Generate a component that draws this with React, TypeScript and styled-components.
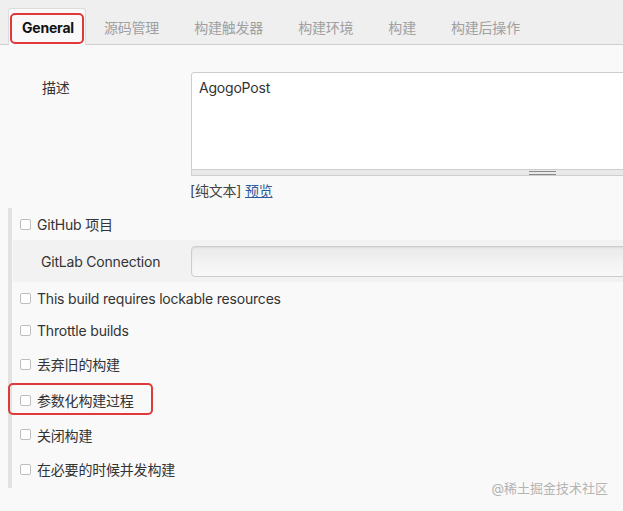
import React from "react";
import styled, { createGlobalStyle } from "styled-components";

const GlobalStyle = createGlobalStyle`
  html, body {
    margin: 0;
    padding: 0;
    background: #f9f9f9;
    overflow: hidden;
  }
  body {
    font-family: Inter, "Noto Sans CJK SC", sans-serif;
    letter-spacing: -0.2px;
    color: #333;
    font-size: 14px;
  }
`;

const Page = styled.div`
  position: relative;
  width: 623px;
  height: 511px;
  overflow: hidden;
  background: #f9f9f9;
`;

const TabBar = styled.div`
  display: flex;
  align-items: flex-end;
  height: 44px;
  padding-left: 8px;
  background: #efefef;
  border-bottom: 1px solid #cfcfcf;
`;

const Tab = styled.div<{ $active?: boolean }>`
  position: relative;
  display: flex;
  align-items: center;
  box-sizing: border-box;
  height: ${(p) => (p.$active ? "37px" : "36px")};
  padding: ${(p) => (p.$active ? "0 11px 0 13px" : "0 16px 0 17px")};
  margin-bottom: ${(p) => (p.$active ? "-1px" : "0")};
  font-size: 14px;
  font-weight: ${(p) => (p.$active ? 700 : 400)};
  color: ${(p) => (p.$active ? "#111" : "#a0a0a0")};
  background: ${(p) => (p.$active ? "#f9f9f9" : "transparent")};
  border: ${(p) => (p.$active ? "1px solid #dcdcdc" : "1px solid transparent")};
  border-bottom: none;
  border-radius: 3px 3px 0 0;

  ${(p) =>
    p.$active &&
    `
    &::after {
      content: "";
      position: absolute;
      top: 4px;
      left: 1px;
      right: 1px;
      bottom: 1px;
      border: 2px solid #e0393a;
      border-radius: 5px;
    }
  `}
`;

const Content = styled.div`
  padding-top: 27px;
`;

const FieldRow = styled.div`
  display: grid;
  grid-template-columns: 191px 1fr;
`;

const FieldLabel = styled.div`
  padding: 5px 0 0 42px;
  font-size: 14px;
  color: #333;
`;

const EditorWrap = styled.div`
  margin-right: -30px;
`;

const TextArea = styled.div`
  height: 98px;
  padding: 6px 7px;
  box-sizing: border-box;
  background: #fff;
  border: 1px solid #cdcdcd;
  border-radius: 3px 3px 0 0;
  font-size: 14px;
  color: #333;
`;

const Grip = styled.div`
  display: flex;
  height: 5px;
  padding-left: 337px;
  background: #e9e9e9;
  border: 1px solid #cfcfcf;
  border-top: none;

  &::before {
    content: "";
    width: 27px;
    height: 2px;
    margin-top: 1px;
    border-top: 1px solid #8a8a8a;
    border-bottom: 1px solid #8a8a8a;
  }
`;

const Hint = styled.div`
  padding-top: 4px;
  margin-left: -1px;
  font-size: 14px;
  color: #444;
`;

const PreviewLink = styled.a`
  color: #2c5a9c;
  text-decoration: underline;
`;

const Section = styled.div`
  margin: 8px 0 0 8px;
  border-left: 4px solid #e2e2e2;
  padding-bottom: 1px;
`;

const OptionRow = styled.label<{ $h: number; $marked?: boolean }>`
  position: relative;
  display: flex;
  align-items: center;
  gap: 6px;
  height: ${(p) => p.$h}px;
  padding-left: 8px;
  font-size: 14px;
  color: #333;

  ${(p) =>
    p.$marked &&
    `
    &::after {
      content: "";
      position: absolute;
      top: 1px;
      left: -4px;
      width: 145px;
      bottom: 3px;
      box-sizing: border-box;
      border: 2px solid #e0393a;
      border-radius: 5px;
    }
  `}
`;

const Box = styled.span`
  width: 11px;
  height: 11px;
  box-sizing: border-box;
  border: 1px solid #bdbdbd;
  border-radius: 2px;
  background: #fff;
  flex: none;
`;

const ConnectionRow = styled.div`
  display: grid;
  grid-template-columns: 178px 1fr;
  align-items: center;
  height: 42px;
  background: #f2f2f2;
  margin-left: 1px;
`;

const ConnectionLabel = styled.div`
  padding-left: 28px;
  font-size: 14px;
  color: #333;
`;

const Select = styled.div`
  height: 31px;
  margin-right: -30px;
  box-sizing: border-box;
  border: 1px solid #cdcdcd;
  border-radius: 4px;
  background: linear-gradient(#e9e9e9, #f4f4f4 60%, #f8f8f8);
  box-shadow: inset 0 1px 2px rgba(0, 0, 0, 0.06);
`;

const Watermark = styled.div`
  position: absolute;
  right: 15px;
  bottom: 14px;
  font-size: 13px;
  letter-spacing: 0;
  color: #b4b4b4;
`;

const tabs = ["源码管理", "构建触发器", "构建环境", "构建", "构建后操作"];

const options: { text: string; h: number; marked?: boolean }[] = [
  { text: "This build requires lockable resources", h: 32 },
  { text: "Throttle builds", h: 32 },
  { text: "丢弃旧的构建", h: 36 },
  { text: "参数化构建过程", h: 36, marked: true },
  { text: "关闭构建", h: 33 },
  { text: "在必要的时候并发构建", h: 36 },
];

export default function App() {
  return (
    <Page>
      <GlobalStyle />
      <TabBar>
        <Tab $active>General</Tab>
        {tabs.map((t) => (
          <Tab key={t}>{t}</Tab>
        ))}
      </TabBar>
      <Content>
        <FieldRow>
          <FieldLabel>描述</FieldLabel>
          <div>
            <EditorWrap>
              <TextArea>AgogoPost</TextArea>
              <Grip />
            </EditorWrap>
            <Hint>
              [纯文本] <PreviewLink>预览</PreviewLink>
            </Hint>
          </div>
        </FieldRow>
        <Section>
          <OptionRow $h={32}>
            <Box />
            GitHub 项目
          </OptionRow>
          <ConnectionRow>
            <ConnectionLabel>GitLab Connection</ConnectionLabel>
            <Select />
          </ConnectionRow>
          {options.map((o) => (
            <OptionRow key={o.text} $h={o.h} $marked={o.marked}>
              <Box />
              {o.text}
            </OptionRow>
          ))}
        </Section>
      </Content>
      <Watermark>@稀土掘金技术社区</Watermark>
    </Page>
  );
}
